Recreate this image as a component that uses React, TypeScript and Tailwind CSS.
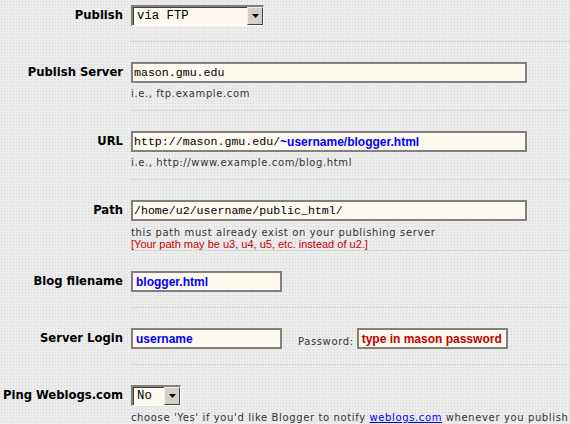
import React from "react";

const labelCls =
  "w-[123px] shrink-0 h-[21px] flex items-center justify-end text-[11.6px] font-bold text-black font-['DejaVu_Sans',sans-serif] whitespace-nowrap";
const inputCls =
  "h-[21px] box-border border-2 border-[#808080] bg-[#fdf9ef] flex items-center pl-[1px] whitespace-nowrap overflow-hidden";
const mono = "font-['Liberation_Mono',monospace] text-[11.6px] text-black";
const blue = "font-['Liberation_Sans',sans-serif] font-bold text-[12px] text-[#0000ff]";
const help = "text-[10px] leading-[12px] text-[#333333] font-['DejaVu_Sans',sans-serif] tracking-[0.62px] whitespace-nowrap";

function Sep({ mt, mb }: { mt: string; mb: string }) {
  return <div className={`ml-[131px] border-t border-dotted border-[#c4c4c4] ${mt} ${mb}`} />;
}

function Select({ w, value }: { w: string; value: string }) {
  return (
    <div
      className={`${w} h-[21px] box-border border-t-2 border-l-2 border-b border-r border-t-[#808080] border-l-[#808080] border-b-white border-r-white flex`}
    >
      <div className="flex-1 bg-[#fdf9ef] flex items-center pl-[3px] border-t border-l border-t-[#404040] border-l-[#404040]">
        <span className="font-['Liberation_Mono',monospace] text-[12.3px] text-black">{value}</span>
      </div>
      <div className="w-[16px] h-full box-border bg-[#d4d0c8] border-t border-l border-t-[#eeeeee] border-l-[#eeeeee] border-b border-r border-b-[#404040] border-r-[#404040] flex items-center justify-center">
        <svg width="7" height="4" viewBox="0 0 7 4">
          <polygon points="0,0 7,0 3.5,4" fill="#000" />
        </svg>
      </div>
    </div>
  );
}

export default function App() {
  return (
    <div className="w-[570px] h-[424px] overflow-hidden bg-[#ececec] bg-[radial-gradient(#d6d6d6_0.7px,transparent_0.8px)] bg-[length:3px_3px] pt-[5px]">
      {/* Publish */}
      <div className="flex">
        <div className={labelCls}>Publish</div>
        <div className="ml-[8px]">
          <Select w="w-[133px]" value="via FTP" />
        </div>
      </div>
      <Sep mt="mt-[15px]" mb="mb-[20px]" />

      {/* Publish Server */}
      <div className="flex">
        <div className={labelCls}>Publish Server</div>
        <div className="ml-[8px]">
          <div className={`${inputCls} w-[396px]`}>
            <span className={mono}>mason.gmu.edu</span>
          </div>
          <div className={`${help} mt-[5px]`}>i.e., ftp.example.com</div>
        </div>
      </div>
      <Sep mt="mt-[10px]" mb="mb-[20px]" />

      {/* URL */}
      <div className="flex">
        <div className={labelCls}>URL</div>
        <div className="ml-[8px]">
          <div className={`${inputCls} w-[396px]`}>
            <span className={mono}>http://mason.gmu.edu/</span>
            <span className={blue}>~username/blogger.html</span>
          </div>
          <div className={`${help} mt-[5px]`}>i.e., http://www.example.com/blog.html</div>
        </div>
      </div>
      <Sep mt="mt-[10px]" mb="mb-[20px]" />

      {/* Path */}
      <div className="flex">
        <div className={labelCls}>Path</div>
        <div className="ml-[8px]">
          <div className={`${inputCls} w-[396px]`}>
            <span className={mono}>/home/u2/username/public_html/</span>
          </div>
          <div className={`${help} mt-[6px] leading-[10px]`}>this path must already exist on your publishing server</div>
          <div className="text-[11px] leading-[10px] text-[#cc0000] font-['Liberation_Sans',sans-serif] whitespace-nowrap">
            [Your path may be u3, u4, u5, etc. instead of u2.]
          </div>
        </div>
      </div>
      <Sep mt="mt-[1px]" mb="mb-[20px]" />

      {/* Blog filename */}
      <div className="flex">
        <div className={labelCls}>Blog filename</div>
        <div className="ml-[8px]">
          <div className={`${inputCls} w-[151px] pl-[3px]`}>
            <span className={blue}>blogger.html</span>
          </div>
        </div>
      </div>
      <Sep mt="mt-[15px]" mb="mb-[20px]" />

      {/* Server Login */}
      <div className="flex">
        <div className={labelCls}>Server Login</div>
        <div className="ml-[8px] flex items-end">
          <div className={`${inputCls} w-[151px] pl-[3px]`}>
            <span className={blue}>username</span>
          </div>
          <span className={`${help} ml-[16px] mb-[1px] leading-[10px]`}>Password:</span>
          <div className={`${inputCls} w-[151px] ml-[3px] pl-[3px]`}>
            <span className="font-['Liberation_Sans',sans-serif] font-bold text-[12px] text-[#c00000]">
              type in mason password
            </span>
          </div>
        </div>
      </div>
      <Sep mt="mt-[15px]" mb="mb-[20px]" />

      {/* Ping */}
      <div className="flex">
        <div className={labelCls}>Ping Weblogs.com</div>
        <div className="ml-[8px]">
          <Select w="w-[50px]" value="No" />
          <div className={`${help} mt-[6px]`}>
            choose 'Yes' if you'd like Blogger to notify{" "}
            <span className="text-[#0000ff] underline">weblogs.com</span> whenever you publish
          </div>
        </div>
      </div>
    </div>
  );
}
